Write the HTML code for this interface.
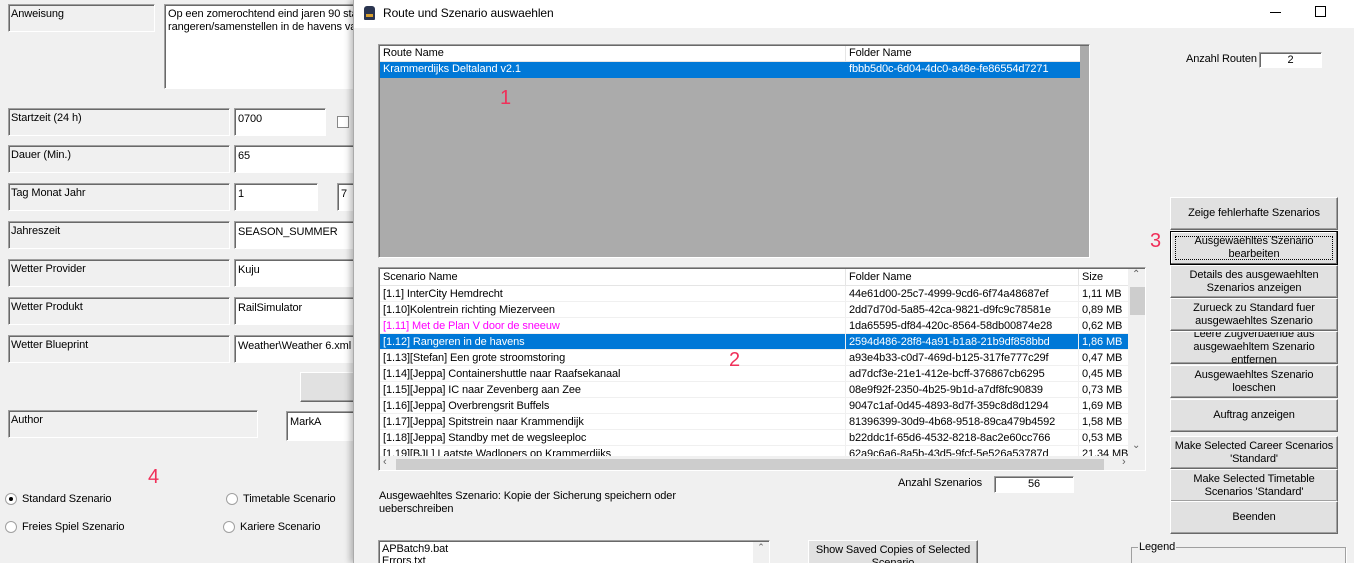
<!DOCTYPE html>
<html><head><meta charset="utf-8"><style>
*{box-sizing:border-box;margin:0;padding:0}
html,body{overflow:hidden}
body{width:1354px;height:563px;overflow:hidden;background:#f0f0f0;font-family:"Liberation Sans",sans-serif;font-size:11px;color:#000;position:relative;letter-spacing:-0.1px}
.a{position:absolute;white-space:nowrap}
.lbl{position:absolute;border:1px solid;border-color:#a0a0a0 #fff #fff #a0a0a0;box-shadow:inset 1px 1px 0 #696969;padding:3px 2px;background:#f0f0f0;white-space:nowrap}
.inp{position:absolute;background:#fff;border:1px solid;border-color:#a0a0a0 #fff #fff #a0a0a0;box-shadow:inset 1px 1px 0 #696969;padding:4px 3px;white-space:nowrap;overflow:hidden}
.btn{position:absolute;background:#e1e1e1;border:1px solid;border-color:#fff #696969 #696969 #fff;box-shadow:inset -1px -1px 0 #a0a0a0;display:flex;align-items:center;justify-content:center;text-align:center;line-height:13px;font-size:11px;overflow:hidden}
.red{position:absolute;color:#f0305a;font-size:20px}
.radio{position:absolute;width:12px;height:12px;border-radius:50%;background:#fff;border:1px solid #a0a0a0}
.row{position:absolute;left:380px;height:16px;line-height:16px;background:#fff;width:748px;border-bottom:1px solid #f0f0f0;overflow:hidden}
.row span{position:absolute;top:0;overflow:hidden;white-space:nowrap}
.row span:nth-child(1){width:462px}
.row span:nth-child(2){width:230px}
.row span:nth-child(3){width:46px}
</style></head><body>
<!-- left panel -->
<div class="lbl" style="left:8px;top:4px;width:147px;height:28px">Anweisung</div>
<div class="inp" style="left:164px;top:4px;width:200px;height:85px;line-height:13px;padding:3px">Op een zomerochtend eind jaren 90 sta<br>rangeren/samenstellen in de havens va</div>
<div class="lbl" style="left:8px;top:108px;width:222px;height:28px">Startzeit (24 h)</div>
<div class="inp" style="left:234px;top:108px;width:92px;height:28px">0700</div>
<div class="a" style="left:337px;top:116px;width:12px;height:12px;background:#fff;border:1px solid #888"></div>
<div class="lbl" style="left:8px;top:145px;width:222px;height:28px">Dauer (Min.)</div>
<div class="inp" style="left:234px;top:145px;width:130px;height:28px">65</div>
<div class="lbl" style="left:8px;top:183px;width:222px;height:28px">Tag Monat Jahr</div>
<div class="inp" style="left:234px;top:183px;width:84px;height:28px">1</div>
<div class="inp" style="left:337px;top:183px;width:30px;height:28px">7</div>
<div class="lbl" style="left:8px;top:221px;width:222px;height:28px">Jahreszeit</div>
<div class="inp" style="left:234px;top:221px;width:130px;height:28px">SEASON_SUMMER</div>
<div class="lbl" style="left:8px;top:259px;width:222px;height:28px">Wetter Provider</div>
<div class="inp" style="left:234px;top:259px;width:130px;height:28px">Kuju</div>
<div class="lbl" style="left:8px;top:297px;width:222px;height:28px">Wetter Produkt</div>
<div class="inp" style="left:234px;top:297px;width:130px;height:28px">RailSimulator</div>
<div class="lbl" style="left:8px;top:335px;width:222px;height:28px">Wetter Blueprint</div>
<div class="inp" style="left:234px;top:335px;width:130px;height:28px">Weather\Weather 6.xml</div>
<div class="btn" style="left:300px;top:372px;width:70px;height:30px"></div>
<div class="lbl" style="left:8px;top:410px;width:250px;height:28px">Author</div>
<div class="inp" style="left:286px;top:411px;width:80px;height:30px">MarkA</div>
<div class="red" style="left:148px;top:466px">4</div>
<div class="radio" style="left:5px;top:493px"><div style="position:absolute;left:3px;top:3px;width:4px;height:4px;border-radius:50%;background:#000"></div></div>
<div class="a" style="left:22px;top:493px">Standard Szenario</div>
<div class="radio" style="left:226px;top:493px"></div>
<div class="a" style="left:243px;top:493px">Timetable Scenario</div>
<div class="radio" style="left:5px;top:521px"></div>
<div class="a" style="left:22px;top:521px">Freies Spiel Szenario</div>
<div class="radio" style="left:223px;top:521px"></div>
<div class="a" style="left:240px;top:521px">Kariere Scenario</div>

<!-- dialog -->
<div class="a" style="left:353px;top:0;width:1001px;height:563px;background:#f0f0f0;box-shadow:-3px 0 6px rgba(0,0,0,0.25);border-left:1px solid #aaa"></div>
<div class="a" style="left:354px;top:0;width:1000px;height:28px;background:#fff"></div>
<div class="a" style="left:364px;top:6px;width:11px;height:14px;background:#2b3550;border-radius:3px 3px 1px 1px"><div style="position:absolute;left:2px;top:8px;width:7px;height:3px;background:#d8a030"></div></div>
<div class="a" style="left:383px;top:6px;font-size:12px">Route und Szenario auswaehlen</div>
<div class="a" style="left:1270px;top:12px;width:11px;height:1px;background:#000"></div>
<div class="a" style="left:1315px;top:6px;width:11px;height:11px;border:1px solid #000"></div>

<!-- route list -->
<div class="a" style="left:378px;top:44px;width:712px;height:214px;background:#ababab;border:1px solid;border-color:#a0a0a0 #fff #fff #a0a0a0;box-shadow:inset 1px 1px 0 #696969"></div>
<div class="a" style="left:380px;top:46px;width:700px;height:16px;background:#fff;border-bottom:1px solid #e5e5e5"></div>
<div class="a" style="left:383px;top:47px">Route Name</div>
<div class="a" style="left:845px;top:46px;width:1px;height:16px;background:#e5e5e5"></div>
<div class="a" style="left:849px;top:47px">Folder Name</div>
<div class="a" style="left:380px;top:62px;width:700px;height:16px;background:#0078d7;color:#fff"><span style="position:absolute;left:3px;top:1px">Krammerdijks Deltaland v2.1</span><span style="position:absolute;left:469px;top:1px">fbbb5d0c-6d04-4dc0-a48e-fe86554d7271</span></div>
<div class="red" style="left:500px;top:87px">1</div>
<div class="a" style="left:1186px;top:53px">Anzahl Routen</div>
<div class="inp" style="left:1259px;top:52px;width:63px;height:16px;padding:1px;text-align:center">2</div>

<!-- scenario list -->
<div class="a" style="left:378px;top:267px;width:768px;height:204px;background:#fff;border:1px solid;border-color:#a0a0a0 #fff #fff #a0a0a0;box-shadow:inset 1px 1px 0 #696969"></div>
<div class="a" style="left:380px;top:269px;width:748px;height:17px;background:#fff;border-bottom:1px solid #e5e5e5"></div>
<div class="a" style="left:383px;top:271px">Scenario Name</div>
<div class="a" style="left:845px;top:269px;width:1px;height:17px;background:#e5e5e5"></div>
<div class="a" style="left:849px;top:271px">Folder Name</div>
<div class="a" style="left:1078px;top:269px;width:1px;height:17px;background:#e5e5e5"></div>
<div class="a" style="left:1082px;top:271px">Size</div>
<div class="row" style="top:286px"><span style="left:3px">[1.1] InterCity Hemdrecht</span><span style="left:469px">44e61d00-25c7-4999-9cd6-6f74a48687ef</span><span style="left:702px">1,11 MB</span></div>
<div class="row" style="top:302px"><span style="left:3px">[1.10]Kolentrein richting Miezerveen</span><span style="left:469px">2dd7d70d-5a85-42ca-9821-d9fc9c78581e</span><span style="left:702px">0,89 MB</span></div>
<div class="row" style="top:318px"><span style="left:3px;color:#f0f">[1.11] Met de Plan V door de sneeuw</span><span style="left:469px">1da65595-df84-420c-8564-58db00874e28</span><span style="left:702px">0,62 MB</span></div>
<div class="row" style="top:334px;background:#0078d7;color:#fff"><span style="left:3px">[1.12] Rangeren in de havens</span><span style="left:469px">2594d486-28f8-4a91-b1a8-21b9df858bbd</span><span style="left:702px">1,86 MB</span></div>
<div class="row" style="top:350px"><span style="left:3px">[1.13][Stefan] Een grote stroomstoring</span><span style="left:469px">a93e4b33-c0d7-469d-b125-317fe777c29f</span><span style="left:702px">0,47 MB</span></div>
<div class="row" style="top:366px"><span style="left:3px">[1.14][Jeppa] Containershuttle naar Raafsekanaal</span><span style="left:469px">ad7dcf3e-21e1-412e-bcff-376867cb6295</span><span style="left:702px">0,45 MB</span></div>
<div class="row" style="top:382px"><span style="left:3px">[1.15][Jeppa] IC naar Zevenberg aan Zee</span><span style="left:469px">08e9f92f-2350-4b25-9b1d-a7df8fc90839</span><span style="left:702px">0,73 MB</span></div>
<div class="row" style="top:398px"><span style="left:3px">[1.16][Jeppa] Overbrengsrit Buffels</span><span style="left:469px">9047c1af-0d45-4893-8d7f-359c8d8d1294</span><span style="left:702px">1,69 MB</span></div>
<div class="row" style="top:414px"><span style="left:3px">[1.17][Jeppa] Spitstrein naar Krammendijk</span><span style="left:469px">81396399-30d9-4b68-9518-89ca479b4592</span><span style="left:702px">1,58 MB</span></div>
<div class="row" style="top:430px"><span style="left:3px">[1.18][Jeppa] Standby met de wegsleeploc</span><span style="left:469px">b22ddc1f-65d6-4532-8218-8ac2e60cc766</span><span style="left:702px">0,53 MB</span></div>
<div class="row" style="top:446px;height:11px"><span style="left:3px">[1.19][BJL] Laatste Wadlopers op Krammerdijks</span><span style="left:469px">62a9c6a6-8a5b-43d5-9fcf-5e526a53787d</span><span style="left:702px">21,34 MB</span></div>
<div class="a" style="left:845px;top:286px;width:1px;height:171px;background:#f0f0f0"></div>
<div class="a" style="left:1078px;top:286px;width:1px;height:171px;background:#f0f0f0"></div>
<div class="red" style="left:729px;top:349px">2</div>
<div class="a" style="left:1128px;top:269px;width:17px;height:188px;background:#f0f0f0"></div>
<div class="a" style="left:1130px;top:287px;width:15px;height:28px;background:#cdcdcd"></div>
<div class="a" style="left:1132px;top:269px;color:#606060;font-size:10px">&#8963;</div>
<div class="a" style="left:1132px;top:440px;color:#606060;font-size:10px">&#8964;</div>
<div class="a" style="left:380px;top:457px;width:765px;height:13px;background:#f0f0f0"></div>
<div class="a" style="left:396px;top:459px;width:708px;height:11px;background:#cdcdcd"></div>
<div class="a" style="left:383px;top:456px;color:#606060">&#8249;</div>
<div class="a" style="left:1122px;top:456px;color:#606060">&#8250;</div>

<div class="a" style="left:898px;top:477px">Anzahl Szenarios</div>
<div class="inp" style="left:994px;top:476px;width:80px;height:17px;padding:1px;text-align:center">56</div>
<div class="a" style="left:379px;top:490px;line-height:13px">Ausgewaehltes Szenario: Kopie der Sicherung speichern oder<br>ueberschreiben</div>
<div class="inp" style="left:378px;top:540px;width:392px;height:30px;padding:2px 3px;line-height:12px">APBatch9.bat<br>Errors.txt</div>
<div class="a" style="left:753px;top:542px;width:16px;height:21px;background:#f0f0f0;color:#606060;font-size:9px;text-align:center">&#8963;</div>
<div class="btn" style="left:808px;top:540px;width:170px;height:32px;align-items:flex-start;padding-top:3px">Show Saved Copies of Selected<br>Scenario</div>

<!-- right buttons -->
<div class="btn" style="left:1170px;top:197px;width:168px;height:33px">Zeige fehlerhafte Szenarios</div>
<div class="red" style="left:1150px;top:230px">3</div>
<div class="btn" style="left:1170px;top:231px;width:168px;height:34px;border:1px solid #000;box-shadow:inset -1px -1px 0 #696969, inset 1px 1px 0 #fff"><div style="position:absolute;left:4px;top:4px;right:4px;bottom:4px;border:1px dotted #000"></div>Ausgewaehltes Szenario<br>bearbeiten</div>
<div class="btn" style="left:1170px;top:265px;width:168px;height:33px">Details des ausgewaehlten<br>Szenarios anzeigen</div>
<div class="btn" style="left:1170px;top:298px;width:168px;height:33px">Zurueck zu Standard fuer<br>ausgewaehltes Szenario</div>
<div class="btn" style="left:1170px;top:331px;width:168px;height:33px">Leere Zugverbaende aus<br>ausgewaehltem Szenario<br>entfernen</div>
<div class="btn" style="left:1170px;top:365px;width:168px;height:33px">Ausgewaehltes Szenario<br>loeschen</div>
<div class="btn" style="left:1170px;top:399px;width:168px;height:33px">Auftrag anzeigen</div>
<div class="btn" style="left:1170px;top:436px;width:168px;height:33px">Make Selected Career Scenarios<br>'Standard'</div>
<div class="btn" style="left:1170px;top:469px;width:168px;height:33px">Make Selected Timetable<br>Scenarios 'Standard'</div>
<div class="btn" style="left:1170px;top:501px;width:168px;height:33px">Beenden</div>
<div class="a" style="left:1131px;top:547px;width:215px;height:20px;border:1px solid #a0a0a0;box-shadow:1px 1px 0 #fff"></div>
<div class="a" style="left:1138px;top:541px;background:#f0f0f0;padding:0 1px">Legend</div>
</body></html>
